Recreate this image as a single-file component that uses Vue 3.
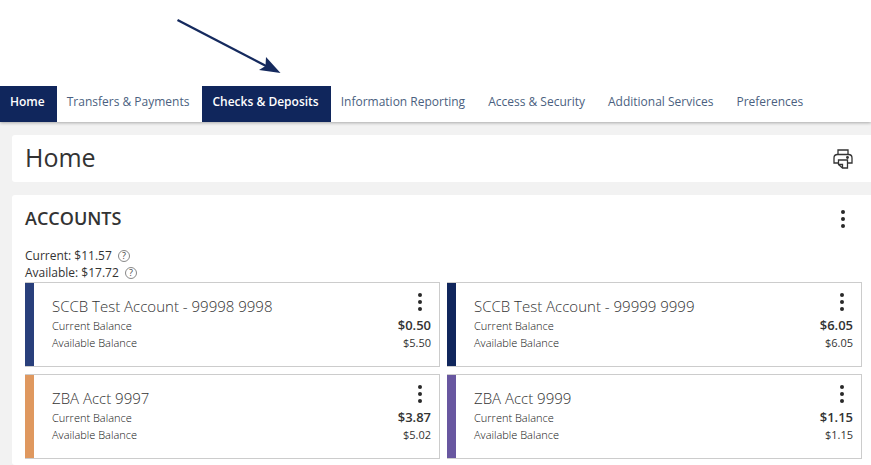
<script setup>
import { ref } from 'vue'

const nav = [
  { label: 'Home', active: true },
  { label: 'Transfers & Payments' },
  { label: 'Checks & Deposits', active: true },
  { label: 'Information Reporting' },
  { label: 'Access & Security' },
  { label: 'Additional Services' },
  { label: 'Preferences' },
]

const totals = [
  { label: 'Current', value: '$11.57' },
  { label: 'Available', value: '$17.72' },
]

const accounts = ref([
  { name: 'SCCB Test Account - 99998 9998', current: '$0.50', available: '$5.50', tone: 'blue' },
  { name: 'SCCB Test Account - 99999 9999', current: '$6.05', available: '$6.05', tone: 'navy' },
  { name: 'ZBA Acct 9997', current: '$3.87', available: '$5.02', tone: 'orange' },
  { name: 'ZBA Acct 9999', current: '$1.15', available: '$1.15', tone: 'purple' },
])
</script>

<template>
  <div class="page">
    <header class="top">
      <svg class="pointer" width="120" height="86" viewBox="170 0 120 86" aria-hidden="true">
        <path d="M177.500 20L268 67" stroke="#152a5e" stroke-width="2.400" fill="none" />
        <path d="M280.500 73L259 70L265.500 66L266 57Z" fill="#152a5e" />
      </svg>
      <nav class="nav">
        <a v-for="item in nav" :key="item.label" href="#" :class="{ active: item.active }">{{ item.label }}</a>
      </nav>
    </header>

    <main class="content">
      <section class="title-bar">
        <h1>Home</h1>
        <button class="icon-button" type="button" aria-label="Print">
          <svg width="20" height="20" viewBox="0 0 20 20" fill="none" stroke="#333" stroke-width="1.300">
            <path d="M5 5V1H15V5" />
            <path d="M5.500 14H1V9Q1 5.500 4.500 5.500H15.500Q19 5.500 19 9V14H15" />
            <path d="M5.500 11H14.500V19H9.500L5.500 15.500Z" />
            <path d="M5.500 15.500H9.500V19" />
            <circle cx="14.500" cy="8.500" r="0.800" fill="#333" />
          </svg>
        </button>
      </section>

      <section class="panel">
        <div class="panel-head">
          <h2>ACCOUNTS</h2>
          <button class="icon-button" type="button" aria-label="Accounts menu">
            <svg width="20" height="20" viewBox="0 0 20 20" fill="#292929">
              <circle cx="10" cy="3" r="2" /><circle cx="10" cy="10" r="2" /><circle cx="10" cy="17" r="2" />
            </svg>
          </button>
        </div>

        <div class="totals">
          <div v-for="total in totals" :key="total.label" class="total">
            <span>{{ total.label }}: {{ total.value }}</span>
            <button class="help" type="button" :aria-label="'About ' + total.label">?</button>
          </div>
        </div>

        <div class="cards">
          <article v-for="account in accounts" :key="account.name" class="card">
            <div class="stripe" :class="account.tone"></div>
            <div class="card-body">
              <div class="card-head">
                <h3>{{ account.name }}</h3>
                <button class="icon-button" type="button" :aria-label="account.name + ' menu'">
                  <svg width="20" height="20" viewBox="0 0 20 20" fill="#292929">
                    <circle cx="10" cy="3" r="2" /><circle cx="10" cy="10" r="2" /><circle cx="10" cy="17" r="2" />
                  </svg>
                </button>
              </div>
              <div class="line">
                <span class="name">Current Balance</span>
                <strong>{{ account.current }}</strong>
              </div>
              <div class="line">
                <span class="name">Available Balance</span>
                <span>{{ account.available }}</span>
              </div>
            </div>
          </article>
        </div>
      </section>
    </main>
  </div>
</template>

<style>
body {
  margin: 0;
}
</style>

<style scoped>
.page {
  display: flex;
  flex-direction: column;
  min-height: 100vh;
  background: #f2f2f2;
  color: #333;
  font-family: "Open Sans", "Noto Sans", sans-serif;
}
.top {
  background: #fff;
  box-shadow: 0 1px 3px rgba(0, 0, 0, 0.3);
}
.pointer {
  display: block;
  margin-left: 170px;
}
.nav {
  display: flex;
}
.nav a {
  padding: 0 13px 4px 10px;
  color: #4b5f80;
  font-size: 12px;
  line-height: 32px;
  text-decoration: none;
  white-space: nowrap;
}
.nav a.active {
  padding-right: 12px;
  background: #10265c;
  color: #fff;
  font-weight: 600;
}
.content {
  display: flex;
  flex: 1;
  flex-direction: column;
  gap: 13px;
  padding: 13px 0 0 12px;
}
.title-bar,
.panel {
  padding: 0 9px 0 13px;
  border-radius: 3px 0 0 3px;
  background: #fff;
}
.title-bar,
.panel-head {
  display: flex;
  align-items: center;
  justify-content: space-between;
}
.title-bar {
  min-height: 47px;
}
h1,
h2,
h3 {
  margin: 0;
}
h1 {
  padding-bottom: 2px;
  font-size: 25px;
  font-weight: 400;
  line-height: 45px;
}
h2 {
  font-size: 18px;
  font-weight: 600;
  line-height: 47px;
}
.icon-button {
  display: flex;
  margin: 0;
  padding: 0;
  border: 0;
  background: none;
}
.title-bar .icon-button,
.panel-head .icon-button {
  margin-right: 9px;
}
.panel {
  flex: 1;
  padding-bottom: 5px;
}
.totals {
  padding: 5px 0 1px;
  font-size: 12px;
  line-height: 17px;
}
.total {
  display: flex;
  align-items: center;
  gap: 6px;
}
.help {
  box-sizing: border-box;
  width: 12px;
  height: 12px;
  padding: 0;
  border: 1px solid #888;
  border-radius: 50%;
  background: none;
  color: #444;
  font: 9px/10px "Open Sans", sans-serif;
}
.cards {
  display: grid;
  grid-template-columns: 1fr 1fr;
  gap: 7px;
}
.card {
  display: flex;
  box-sizing: border-box;
  min-height: 85px;
  border: 1px solid #ccc;
  border-left: 0;
  font-size: 11px;
}
.stripe {
  flex: none;
  width: 9px;
}
.stripe.blue {
  background: #293f7b;
}
.stripe.navy {
  background: #10265c;
}
.stripe.orange {
  background: #df985f;
}
.stripe.purple {
  background: #6857a0;
}
.card-body {
  flex: 1;
  padding: 9px 8px 14px 18px;
}
.card-head {
  display: flex;
  justify-content: space-between;
}
.card-head .icon-button {
  align-self: flex-start;
  margin-right: 1px;
}
h3 {
  padding-top: 4px;
  font-size: 15px;
  font-weight: 300;
  line-height: 21px;
}
.line {
  display: flex;
  align-items: baseline;
  justify-content: space-between;
  line-height: 17px;
}
.line .name {
  color: #111;
  font-weight: 300;
}
.line strong {
  font-size: 13px;
  font-weight: 600;
}
</style>
